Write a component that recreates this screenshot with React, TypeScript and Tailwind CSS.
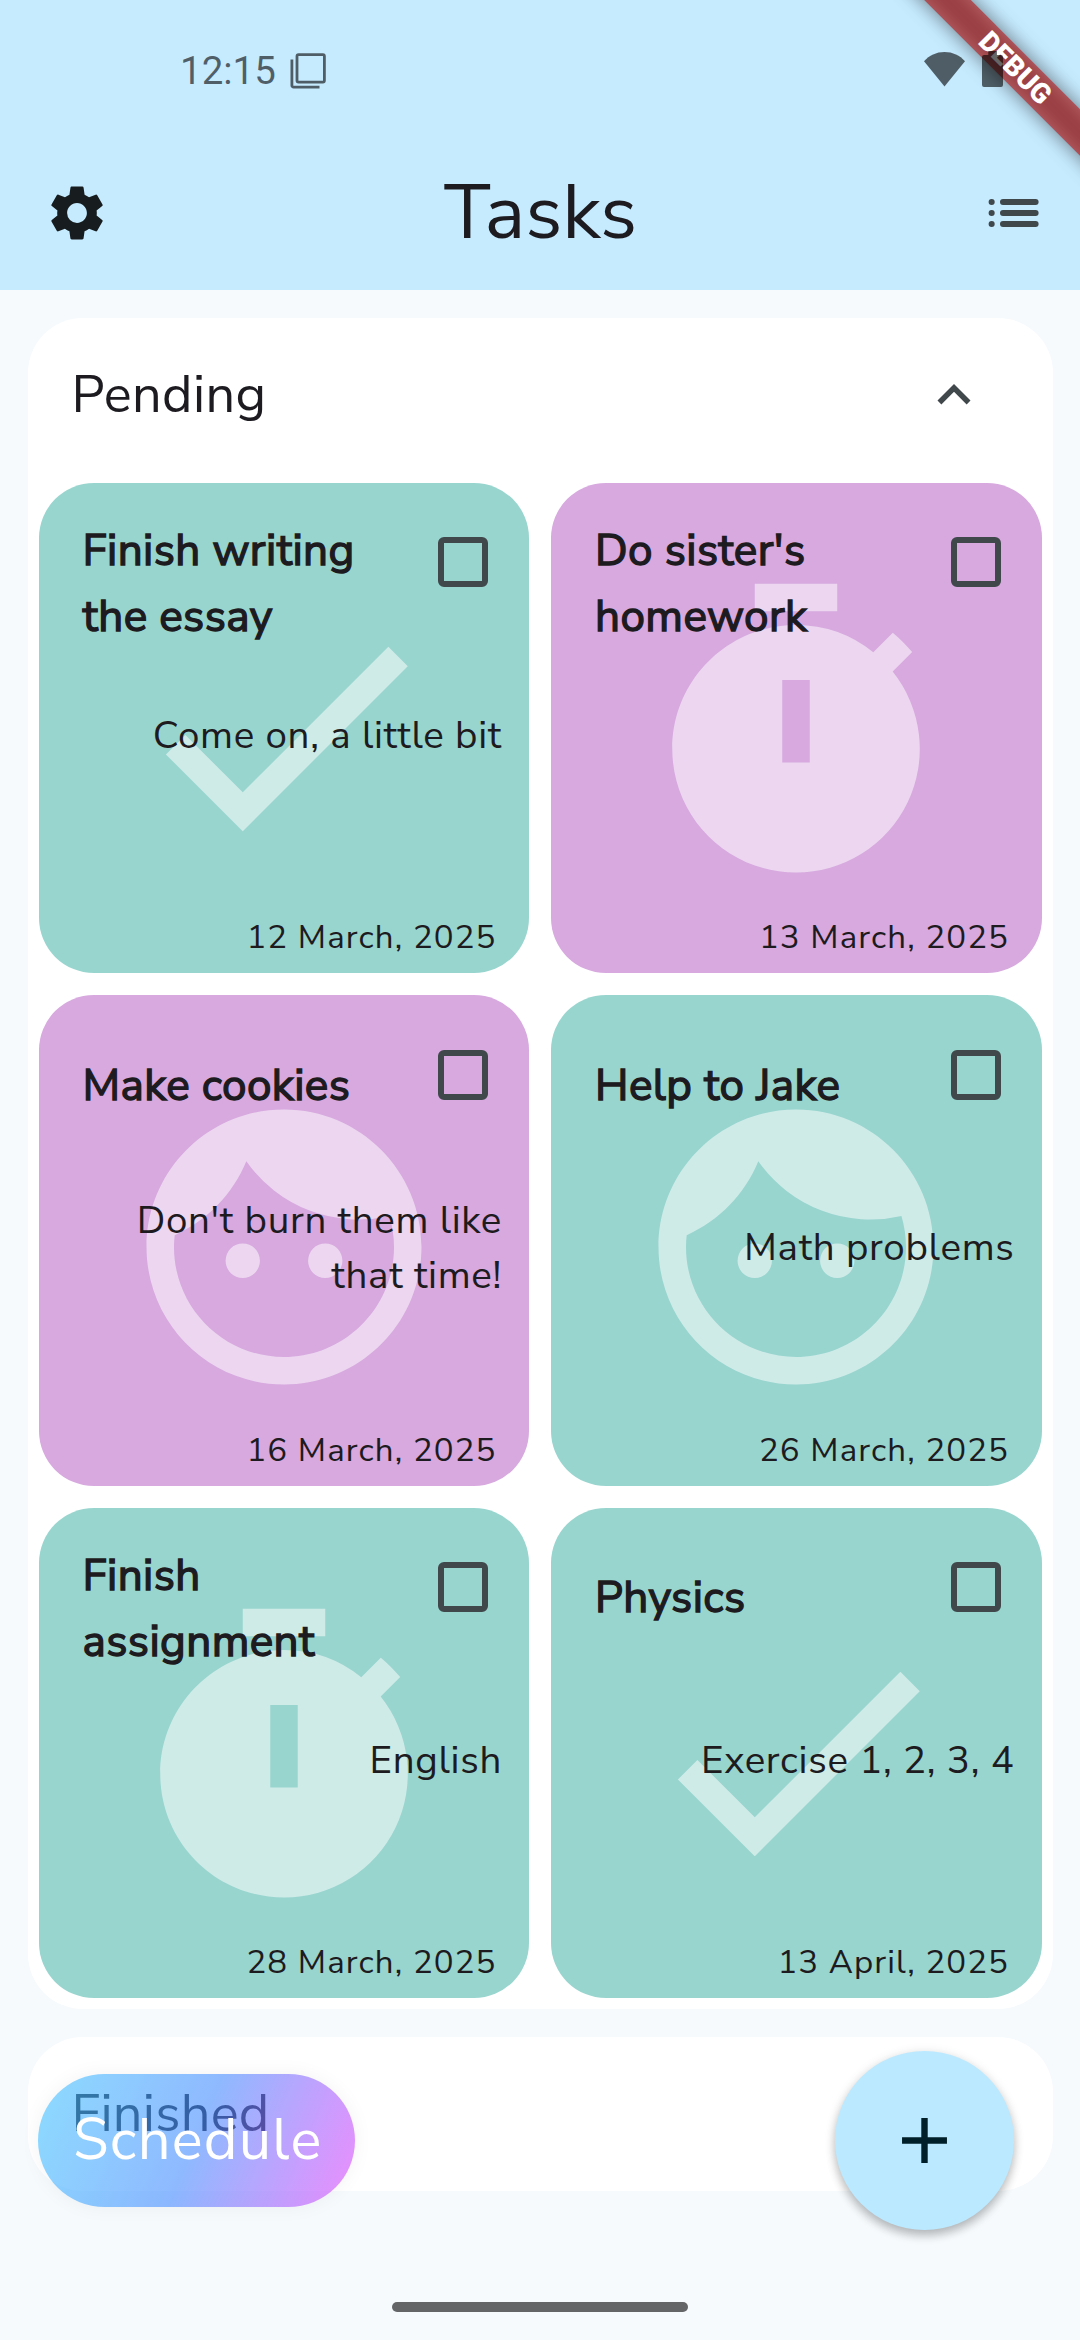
type IconName = "check" | "timer" | "face";

type Task = {
  title: string[];
  description: string[];
  date: string;
  icon: IconName;
  tone: "teal" | "purple";
};

const tasks: Task[] = [
  { title: ["Finish writing", "the essay"], description: ["Come on, a little bit"], date: "12 March, 2025", icon: "check", tone: "teal" },
  { title: ["Do sister's", "homework"], description: [], date: "13 March, 2025", icon: "timer", tone: "purple" },
  { title: ["Make cookies"], description: ["Don't burn them like", "that time!"], date: "16 March, 2025", icon: "face", tone: "purple" },
  { title: ["Help to Jake"], description: ["Math problems"], date: "26 March, 2025", icon: "face", tone: "teal" },
  { title: ["Finish", "assignment"], description: ["English"], date: "28 March, 2025", icon: "timer", tone: "teal" },
  { title: ["Physics"], description: ["Exercise 1, 2, 3, 4"], date: "13 April, 2025", icon: "check", tone: "teal" },
];

const iconPaths: Record<IconName, string> = {
  check: "M9 16.17 4.83 12l-1.42 1.41L9 19 21 7l-1.41-1.41z",
  timer:
    "M9 1h6v2H9zM19.03 7.39l1.42-1.42c-.43-.51-.9-.99-1.41-1.41l-1.42 1.42A8.96 8.96 0 0 0 12 4c-4.97 0-9 4.03-9 9s4.02 9 9 9a8.99 8.99 0 0 0 7.03-14.61zM13 14h-2V8h2z",
  face: "M9 11.75a1.25 1.25 0 1 0 0 2.5 1.25 1.25 0 0 0 0-2.5zm6 0a1.25 1.25 0 1 0 0 2.5 1.25 1.25 0 0 0 0-2.5zM12 2C6.48 2 2 6.48 2 12s4.48 10 10 10 10-4.48 10-10S17.52 2 12 2zm0 18c-4.41 0-8-3.59-8-8 0-.29.02-.58.05-.86 2.36-1.05 4.23-2.98 5.21-5.37a9.974 9.974 0 0 0 10.41 3.97c.21.71.33 1.47.33 2.26 0 4.41-3.59 8-8 8z",
};

function StatusBar() {
  return (
    <div className="flex h-[136px] items-center pt-[5px] pr-[77px] pl-[180px]">
      <span className="pt-[1px] font-['Roboto'] text-[38.5px] leading-[46px] text-black/60">12:15</span>
      <svg className="ml-[14px] size-[36px]" viewBox="0 0 36 36" fill="none" stroke="#000" strokeOpacity="0.6" strokeWidth="2.8">
        <rect x="7" y="1.7" width="27.4" height="27.4" rx="1.5" />
        <path d="M1.9 6.5v26a1.6 1.6 0 0 0 1.6 1.6h26" />
      </svg>
      <svg className="relative z-30 mb-[3px] ml-auto h-[36px] w-[41px]" viewBox="0 0 41 36" fill="#000" fillOpacity="0.6">
        <path d="M20.5 35.5 0 10.2C5.2 4.4 12.2 1 20.5 1S35.8 4.4 41 10.2z" />
      </svg>
      <svg className="relative z-30 mb-[3px] ml-[17px] h-[36px] w-[21px]" viewBox="0 0 21 36" fill="#000" fillOpacity="0.6">
        <path d="M6.3 0h8.6v4H19a2 2 0 0 1 2 2v28a2 2 0 0 1-2 2H2a2 2 0 0 1-2-2V6a2 2 0 0 1 2-2h4.3z" />
      </svg>
    </div>
  );
}

function DebugBanner() {
  return (
    <div className="pointer-events-none absolute top-0 right-0 z-20 h-[240px] w-[240px] overflow-hidden">
      <div className="absolute top-[49.6px] left-[3.9px] h-[33px] w-[340px] rotate-45 bg-black/50 blur-[10px]" />
      <div className="absolute top-[49.6px] left-[3.9px] flex h-[33px] w-[340px] rotate-45 items-center justify-center bg-[#b71c1c]/63 pl-[4px] font-['Roboto'] text-[28px] leading-[33px] font-black text-white">
        DEBUG
      </div>
    </div>
  );
}

function Header() {
  return (
    <header className="h-[290px] bg-[#c6ebff]">
      <StatusBar />
      <div className="grid h-[154px] grid-cols-[1fr_auto_1fr] items-center pr-[41px] pl-[44px]">
        <svg className="size-[66px]" viewBox="0 0 24 24" fill="#171d1e">
          <path d="M19.14 12.94c.04-.3.06-.61.06-.94 0-.32-.02-.64-.07-.94l2.03-1.58a.49.49 0 0 0 .12-.61l-1.92-3.32a.488.488 0 0 0-.59-.22l-2.39.96c-.5-.38-1.03-.7-1.62-.94l-.36-2.54a.484.484 0 0 0-.48-.41h-3.84c-.24 0-.43.17-.47.41l-.36 2.54c-.59.24-1.13.57-1.62.94l-2.39-.96c-.22-.08-.47 0-.59.22L2.74 8.87c-.12.21-.08.47.12.61l2.03 1.58c-.05.3-.09.63-.09.94s.02.64.07.94l-2.03 1.58a.49.49 0 0 0-.12.61l1.92 3.32c.12.22.37.29.59.22l2.39-.96c.5.38 1.03.7 1.62.94l.36 2.54c.05.24.24.41.48.41h3.84c.24 0 .44-.17.47-.41l.36-2.54c.59-.24 1.13-.56 1.62-.94l2.39.96c.22.08.47 0 .59-.22l1.92-3.32c.12-.22.07-.47-.12-.61l-2.01-1.58zM12 15.6A3.61 3.61 0 0 1 8.4 12c0-1.98 1.62-3.6 3.6-3.6s3.6 1.62 3.6 3.6-1.62 3.6-3.6 3.6z" />
        </svg>
        <h1 className="pr-[2px] text-[77px] leading-[154px] text-[#1d1b20]">Tasks</h1>
        <svg className="h-[28px] w-[51px] justify-self-end" viewBox="0 0 51 28" fill="none" stroke="#40484c" strokeWidth="6" strokeLinecap="round">
          <path d="M3.6 3h.1M3.6 14h.1M3.6 25h.1M15 3h32.6M15 14h32.6M15 25h32.6" />
        </svg>
      </div>
    </header>
  );
}

function TaskCard({ task }: { task: Task }) {
  return (
    <article
      className={`relative isolate flex h-[490.5px] flex-col overflow-hidden rounded-[55px] text-[#1d1b20] ${
        task.tone === "teal" ? "bg-[#99d5cf]" : "bg-[#d7a9df]"
      }`}
    >
      <svg className="absolute top-[87px] left-[80.25px] -z-10 size-[330px]" viewBox="0 0 24 24" fill="#fff" fillOpacity="0.53">
        <path d={iconPaths[task.icon]} />
      </svg>
      <div className="flex h-[167px] items-start justify-between pr-[41px] pl-[44px]">
        <h3
          className={`text-[44px] leading-[66px] tracking-[0.42px] [-webkit-text-stroke:1.4px_#1d1b20] ${
            task.title.length > 1 ? "pt-[35.7px]" : "pt-[57.7px]"
          }`}
        >
          {task.title.map((line) => (
            <span key={line} className="block whitespace-nowrap">{line}</span>
          ))}
        </h3>
        <span className="mt-[54.5px] size-[50px] rounded-[6px] border-6 border-[#40484c]" />
      </div>
      <div className="flex flex-1 flex-col justify-center pr-[27px] text-right text-[38.5px] leading-[55px] tracking-[0.69px]">
        {task.description.map((line) => (
          <p key={line} className="whitespace-nowrap">{line}</p>
        ))}
      </div>
      <p className="flex h-[152px] items-end justify-end pr-[32.5px] pb-[13px] text-[33px] leading-[44px] tracking-[1.1px]">
        {task.date}
      </p>
    </article>
  );
}

export default function App() {
  return (
    <div className="relative flex h-[2340px] w-[1080px] flex-col overflow-hidden bg-[#f6fafd] font-['Nunito_Sans','Nunito','Lato',sans-serif]">
      <Header />
      <DebugBanner />

      <main className="flex flex-col gap-[27.5px] px-[27.5px] pt-[27.5px]">
        <section className="rounded-[55px] bg-white px-[11px] pb-[11px]">
          <div className="flex h-[165px] items-center justify-between pr-[55px] pb-[10px] pl-[33px]">
            <h2 className="text-[52.25px] leading-[72px] tracking-[0.4px] text-[#1d1b20]">Pending</h2>
            <svg className="size-[66px]" viewBox="0 0 24 24" fill="#40484c">
              <path d="m12 8-6 6 1.41 1.41L12 10.83l4.59 4.58L18 14z" />
            </svg>
          </div>
          <div className="grid grid-cols-2 gap-[22px]">
            {tasks.map((task) => (
              <TaskCard key={task.date} task={task} />
            ))}
          </div>
        </section>

        <section className="flex h-[154px] items-center rounded-[55px] bg-white pl-[44px]">
          <h2 className="text-[52.25px] leading-[72px] tracking-[0.3px] text-[#1d1b20]">Finished</h2>
        </section>
      </main>

      <button className="absolute top-[2074px] left-[38px] z-10 h-[132.5px] w-[317px] rounded-full bg-[linear-gradient(112.7deg,#40c4ff99,#448aff99_50%,#e040fb99)] pl-[35px] text-left text-[57.75px] leading-[132.5px] tracking-[1.25px] text-white shadow-[0_0_20px_rgba(0,0,0,0.05)]">
        Schedule
      </button>

      <button className="absolute top-[2051px] left-[835px] z-10 flex size-[179px] items-center justify-center rounded-full bg-[#bbe9ff] shadow-[0_6px_10px_rgba(0,0,0,0.2),0_2px_12px_rgba(0,0,0,0.12)]">
        <svg className="size-[77px]" viewBox="0 0 24 24" fill="#001f29">
          <path d="M19 13h-6v6h-2v-6H5v-2h6V5h2v6h6z" />
        </svg>
      </button>

      <div className="absolute bottom-[28px] left-[392px] h-[10px] w-[296px] rounded-full bg-[#636567]" />
    </div>
  );
}
